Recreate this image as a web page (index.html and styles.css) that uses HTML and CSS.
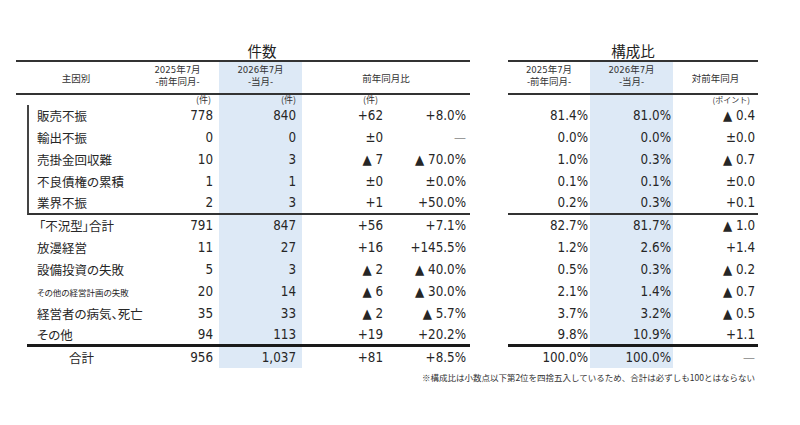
FILE: index.html
```html
<!DOCTYPE html>
<html lang="ja">
<head>
<meta charset="utf-8">
<title>主因別 倒産件数</title>
<link rel="stylesheet" href="styles.css">
</head>
<body>
<div class="page">
  <div class="tables">
    <section class="block block-left">
      <div class="title title-left">件数</div>
      <table class="tbl">
        <colgroup>
          <col class="w-sp"><col class="w-lbl"><col class="w-prev"><col class="w-cur"><col class="w-diff"><col class="w-pct">
        </colgroup>
        <thead>
          <tr>
            <th colspan="2">主因別</th>
            <th class="two">2025年7月<br>-前年同月-</th>
            <th class="two cur">2026年7月<br>-当月-</th>
            <th colspan="2">前年同月比</th>
          </tr>
        </thead>
        <tbody>
          <tr class="unit"><td class="sp"></td><td></td><td class="u-prev">(件)</td><td class="cur u-cur">(件)</td><td class="u-diff">(件)</td><td></td></tr>
          <tr><td class="sp"></td><td class="lbl br">販売不振</td><td class="v-prev">778</td><td class="cur v-cur">840</td><td class="v-diff">+62</td><td class="v-pct">+8.0%</td></tr>
          <tr><td class="sp"></td><td class="lbl br">輸出不振</td><td class="v-prev">0</td><td class="cur v-cur">0</td><td class="v-diff">±0</td><td class="v-pct dash">—</td></tr>
          <tr><td class="sp"></td><td class="lbl br">売掛金回収難</td><td class="v-prev">10</td><td class="cur v-cur">3</td><td class="v-diff">▲ 7</td><td class="v-pct">▲ 70.0%</td></tr>
          <tr><td class="sp"></td><td class="lbl br">不良債権の累積</td><td class="v-prev">1</td><td class="cur v-cur">1</td><td class="v-diff">±0</td><td class="v-pct">±0.0%</td></tr>
          <tr class="grp-end"><td class="sp"></td><td class="lbl br">業界不振</td><td class="v-prev">2</td><td class="cur v-cur">3</td><td class="v-diff">+1</td><td class="v-pct">+50.0%</td></tr>
          <tr><td class="sp"></td><td class="lbl sum">「不況型」合計</td><td class="v-prev">791</td><td class="cur v-cur">847</td><td class="v-diff">+56</td><td class="v-pct">+7.1%</td></tr>
          <tr><td class="sp"></td><td class="lbl">放漫経営</td><td class="v-prev">11</td><td class="cur v-cur">27</td><td class="v-diff">+16</td><td class="v-pct">+145.5%</td></tr>
          <tr><td class="sp"></td><td class="lbl">設備投資の失敗</td><td class="v-prev">5</td><td class="cur v-cur">3</td><td class="v-diff">▲ 2</td><td class="v-pct">▲ 40.0%</td></tr>
          <tr><td class="sp"></td><td class="lbl small">その他の経営計画の失敗</td><td class="v-prev">20</td><td class="cur v-cur">14</td><td class="v-diff">▲ 6</td><td class="v-pct">▲ 30.0%</td></tr>
          <tr><td class="sp"></td><td class="lbl">経営者の病気、死亡</td><td class="v-prev">35</td><td class="cur v-cur">33</td><td class="v-diff">▲ 2</td><td class="v-pct">▲ 5.7%</td></tr>
          <tr class="sub-end"><td class="sp"></td><td class="lbl">その他</td><td class="v-prev">94</td><td class="cur v-cur">113</td><td class="v-diff">+19</td><td class="v-pct">+20.2%</td></tr>
          <tr class="total"><td class="sp"></td><td class="lbl tot">合計</td><td class="v-prev">956</td><td class="cur v-cur">1,037</td><td class="v-diff">+81</td><td class="v-pct">+8.5%</td></tr>
        </tbody>
      </table>
    </section>

    <section class="block block-right">
      <div class="title">構成比</div>
      <table class="tbl">
        <colgroup>
          <col class="r-prev"><col class="r-cur"><col class="r-diff">
        </colgroup>
        <thead>
          <tr>
            <th class="two">2025年7月<br>-前年同月-</th>
            <th class="two cur">2026年7月<br>-当月-</th>
            <th>対前年同月</th>
          </tr>
        </thead>
        <tbody>
          <tr class="unit"><td></td><td class="cur"></td><td class="u-pt">(ポイント)</td></tr>
          <tr><td class="p-prev">81.4%</td><td class="cur p-cur">81.0%</td><td class="p-diff">▲ 0.4</td></tr>
          <tr><td class="p-prev">0.0%</td><td class="cur p-cur">0.0%</td><td class="p-diff">±0.0</td></tr>
          <tr><td class="p-prev">1.0%</td><td class="cur p-cur">0.3%</td><td class="p-diff">▲ 0.7</td></tr>
          <tr><td class="p-prev">0.1%</td><td class="cur p-cur">0.1%</td><td class="p-diff">±0.0</td></tr>
          <tr class="grp-end"><td class="p-prev">0.2%</td><td class="cur p-cur">0.3%</td><td class="p-diff">+0.1</td></tr>
          <tr><td class="p-prev">82.7%</td><td class="cur p-cur">81.7%</td><td class="p-diff">▲ 1.0</td></tr>
          <tr><td class="p-prev">1.2%</td><td class="cur p-cur">2.6%</td><td class="p-diff">+1.4</td></tr>
          <tr><td class="p-prev">0.5%</td><td class="cur p-cur">0.3%</td><td class="p-diff">▲ 0.2</td></tr>
          <tr><td class="p-prev">2.1%</td><td class="cur p-cur">1.4%</td><td class="p-diff">▲ 0.7</td></tr>
          <tr><td class="p-prev">3.7%</td><td class="cur p-cur">3.2%</td><td class="p-diff">▲ 0.5</td></tr>
          <tr class="sub-end"><td class="p-prev">9.8%</td><td class="cur p-cur">10.9%</td><td class="p-diff">+1.1</td></tr>
          <tr class="total"><td class="p-prev">100.0%</td><td class="cur p-cur">100.0%</td><td class="p-diff dash">—</td></tr>
        </tbody>
      </table>
    </section>
  </div>
  <p class="note">※構成比は小数点以下第2位を四捨五入しているため、合計は必ずしも100とはならない</p>
</div>
</body>
</html>
```

FILE: styles.css
```css
html, body {
  margin: 0;
  padding: 0;
  background: #ffffff;
}

body {
  color: #262626;
  font-family: "Noto Sans CJK JP", sans-serif;
}

.page {
  width: 742px;
  padding: 42px 0 0 16px;
}

.tables {
  display: flex;
  gap: 38px;
}

.block-left { width: 454px; }
.block-right { width: 250px; }

.title {
  height: 18px;
  line-height: 18px;
  font-size: 14.5px;
  text-align: center;
  color: #222;
}

.title-left { padding-left: 38px; }

.tbl {
  width: 100%;
  table-layout: fixed;
  border-collapse: separate;
  border-spacing: 0;
}

.w-sp { width: 11px; }
.w-lbl { width: 109px; }
.w-prev { width: 83px; }
.w-cur { width: 83px; }
.w-diff { width: 87px; }
.w-pct { width: 81px; }

.r-prev { width: 82px; }
.r-cur { width: 83px; }
.r-diff { width: 85px; }

.tbl th {
  border-top: 2px solid #333;
  border-bottom: 2px solid #333;
  padding: 0;
  font-weight: normal;
  font-size: 9.5px;
  line-height: 12px;
  text-align: center;
  vertical-align: middle;
  color: #333;
}

.tbl th.two {
  padding: 2px 0 5px;
  font-family: "DejaVu Sans Condensed", "Noto Sans CJK JP", sans-serif;
}

.cur { background: #dde9f6; }

.tbl td {
  padding: 0;
  line-height: 22px;
  font-size: 13.3px;
  text-align: right;
  white-space: nowrap;
  font-family: "DejaVu Sans Condensed", "DejaVu Sans", sans-serif;
  color: #262626;
}

.tbl tr.unit td {
  line-height: 10px;
  font-size: 9px;
  font-family: "Noto Sans CJK JP", sans-serif;
  color: #333;
}

.u-prev { padding-right: 8px !important; }
.u-cur { padding-right: 6px !important; }
.u-diff { padding-right: 11px !important; }
.u-pt { padding-right: 8px !important; font-size: 8px !important; }

.tbl td.lbl {
  text-align: left;
  padding-left: 10px;
  font-family: "Noto Sans CJK JP", sans-serif;
  font-size: 12.5px;
  font-feature-settings: "palt";
}

.tbl td.br {
  border-left: 2px solid #444;
  padding-left: 8px;
}

.tbl td.sum { padding-left: 12px; }

.tbl td.small { font-size: 8.5px; }

.tbl td.tot {
  text-align: center;
  padding-left: 0;
}

.v-prev, .v-cur, .v-diff { padding-right: 6px !important; }
.v-pct { padding-right: 4px !important; }

.p-prev, .p-cur { padding-right: 2px !important; }
.p-diff { padding-right: 3px !important; }

.tbl td.dash { color: #9a9a9a; }

.tbl tr.grp-end td { line-height: 20px; }
.tbl tr.grp-end td:not(.sp) { border-bottom: 2px solid #333; }
.tbl tr.grp-end td.sp { line-height: 22px; }

.tbl tr.sub-end td { line-height: 19px; }
.tbl tr.sub-end td:not(.sp) { border-bottom: 3px solid #1a1a1a; }
.tbl tr.sub-end td.sp { line-height: 22px; }

.tbl tr.total td { line-height: 21px; }

.note {
  margin: 3px 0 0;
  padding-right: 3px;
  text-align: right;
  font-size: 8.5px;
  line-height: 12px;
  color: #333;
}
```
